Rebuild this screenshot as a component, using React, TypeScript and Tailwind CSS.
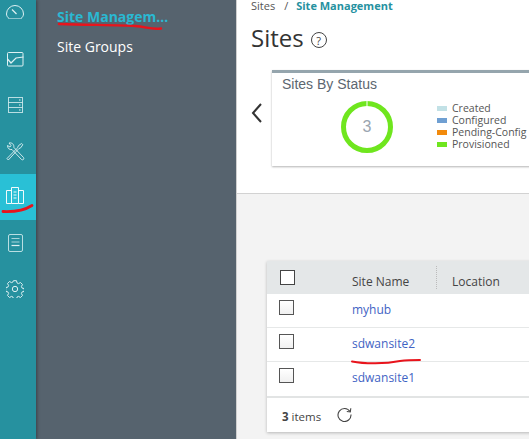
const S = "#dff1f3";

function Gauge() {
  return (
    <svg width="18" height="16" viewBox="0 0 18 16" fill="none" stroke={S} strokeWidth="1">
      <path d="M3 13.500C1.500 12.500.5 10.500.5 9a8.500 8.500 0 0 1 17 0c0 1.500-1 3.500-2.500 4.500" />
      <path d="M3 13.500h12" strokeOpacity=".55" />
      <path d="M6 4.500l4.500 4.500" strokeWidth="1.200" />
    </svg>
  );
}
function Chart() {
  return (
    <svg width="17" height="15" viewBox="0 0 17 15" fill="none" stroke={S} strokeWidth="1">
      <rect x=".5" y=".5" width="15.5" height="13.5" rx="1" />
      <path d="M.5 7l3.500 4 5-5 7.500-1" strokeWidth="1.200" />
    </svg>
  );
}
function Servers() {
  return (
    <svg width="15" height="16" viewBox="0 0 15 16" fill="none" stroke={S} strokeWidth="1">
      <rect x=".5" y=".5" width="14" height="15" strokeOpacity=".8" />
      <path d="M.5 5.500h14M.5 10.500h14" strokeOpacity=".8" />
      <path d="M11 3h1.500M11 8h1.500M11 13h1.500" />
    </svg>
  );
}
function Tools() {
  return (
    <svg width="19" height="19" viewBox="0 0 19 19" fill="none" stroke={S} strokeWidth="1" strokeOpacity=".9">
      <path d="M1 16.500l1.300 1.500 9.700-10.500.8-.8 2-1 2-3-1.200-1.200-3 2-1 2-.8 1z" />
      <path d="M3 1l2 2.500-1 1.500-2.500-1.500c0 3 2 4.500 4.500 4l9.500 10c1.500 1 3-.5 2-2L7.800 5.300C8.300 2.500 6 .3 3 1z" />
    </svg>
  );
}
function Building() {
  return (
    <svg width="18" height="21" viewBox="0 0 18 21" fill="none" stroke="#f2fbfc" strokeWidth="1">
      <path d="M5.500 16.500V.5h7v16zM5.500 3.500H.5v13h5M12.500 3.500h5v13h-5" />
      <path d="M7.500 5h3M7.500 8h3M7.500 11h3" />
    </svg>
  );
}
function Doc() {
  return (
    <svg width="15" height="18" viewBox="0 0 15 18" fill="none" stroke={S} strokeWidth="1">
      <rect x=".5" y=".5" width="14" height="17" rx="1.500" strokeOpacity=".8" />
      <path d="M3.500 4.500h8M3.500 8h8" strokeWidth="1.200" strokeOpacity=".7" />
      <path d="M3.500 11.500h8" strokeWidth="1.200" />
    </svg>
  );
}
function Gear() {
  return (
    <svg width="18" height="18" viewBox="0 0 18 18" fill="none" stroke={S} strokeWidth="1">
      <circle cx="9" cy="9" r="2.700" />
      <path d="M7.500 .7h3l.5 2.200 1.500.7 2-1.100 2 2.100-1.100 1.900.7 1.600 2.200.5v2.800l-2.200.5-.7 1.600 1.100 1.900-2 2.100-2-1.100-1.500.7-.5 2.200h-3l-.5-2.200-1.500-.7-2 1.100-2-2.100 1.100-1.900-.7-1.600-2.200-.5V7.600l2.200-.5.700-1.600-1.100-1.900 2-2.100 2 1.100 1.500-.7z" />
    </svg>
  );
}
function Box() {
  return <div className="h-[15px] w-[15px] border border-[#555] bg-[linear-gradient(#fff,#f0f0f0)]" />;
}

const legend = [
  ["Created", "bg-[#c2e1e6]"],
  ["Configured", "bg-[#6f9fd2]"],
  ["Pending-Config", "bg-[#f28a0c]"],
  ["Provisioned", "bg-[#6fe61e]"],
];

function Row({ name, border }: { name: string; border?: boolean }) {
  return (
    <div className={`flex h-[34px] ${border ? "border-b border-[#e6e8e8]" : ""}`}>
      <div className="w-[85px] pl-[12px] pt-[6px]"><Box /></div>
      <div className="pt-[6px] text-[12px] leading-[20px] text-[#3f63c4]">{name}</div>
    </div>
  );
}

export default function App() {
  return (
    <div className="relative flex h-[439px] w-[529px] overflow-hidden bg-white font-['Open_Sans',sans-serif]">
      <nav className="z-10 flex h-full w-[36px] shrink-0 flex-col bg-[#26919f] shadow-[1px_0_3px_rgba(0,0,0,0.35)]">
        <div className="-mt-[10px] flex flex-col">
          {[Gauge, Chart, Servers, Tools, Building, Doc, Gear].map((Icon, i) => (
            <div key={i} className={`flex h-[46px] items-center justify-center pr-[6px] ${i === 4 ? "bg-[#29c0d6]" : ""}`}>
              <Icon />
            </div>
          ))}
        </div>
      </nav>

      <aside className="w-[200px] shrink-0 bg-[#56636e] pl-[21px] pt-[7px] text-[14px] leading-[20px]">
        <div className="font-bold text-[#2ab8d2]">Site Managem...</div>
        <div className="mt-[10px] text-white">Site Groups</div>
      </aside>

      <main className="flex h-full w-[293px] shrink-0 flex-col overflow-hidden border-l border-[#cfcfcf]">
        <section className="h-[193px] shrink-0 overflow-hidden bg-white">
          <div className="flex h-[11px] whitespace-nowrap pl-[14px] text-[11px] leading-[11px] text-[#555]">
            Sites<span className="ml-[9px]">/</span>
            <span className="ml-[8px] font-bold text-[#26919f]">Site Management</span>
          </div>
          <div className="mt-[9px] flex h-[36px] items-center pl-[14px]">
            <h1 className="text-[24px] leading-[36px] text-[#333]">Sites</h1>
            <span className="ml-[7px] mt-[4px] flex h-[16px] w-[16px] items-center justify-center rounded-full border border-[#444] text-[11px] leading-none text-[#444]">?</span>
          </div>
          <div className="mt-[14px] flex items-start">
            <svg className="ml-[14px] mt-[33px] w-[12px] shrink-0" width="12" height="20" viewBox="0 0 12 20" fill="none" stroke="#333" strokeWidth="2">
              <path d="M10 1 2 10l8 9" />
            </svg>
            <div className="ml-[9px] h-[96px] w-[400px] shrink-0 border-t-[3px] border-[#95a5ad] bg-white pl-[10px] pt-[2px] shadow-[0_1px_2px_rgba(0,0,0,0.3)]">
              <div className="font-['Liberation_Sans',sans-serif] text-[14px] leading-[18px] text-[#5c6670]">Sites By Status</div>
              <div className="mt-[8px] flex">
                <div className="relative ml-[59px] flex h-[52px] w-[52px] items-center justify-center">
                  <svg className="absolute inset-0" width="52" height="52" viewBox="0 0 52 52">
                    <circle cx="26" cy="26" r="23.500" fill="none" stroke="#6fe61e" strokeWidth="5" />
                    <rect x="25.500" y="0" width="1" height="5" fill="#fff" />
                  </svg>
                  <span className="font-['Liberation_Sans',sans-serif] text-[16px] text-[#9aa5b0]">3</span>
                </div>
                <div className="ml-[44px] mt-[1px] text-[10.500px] leading-[12px] text-[#555]">
                  {legend.map(([t, c]) => (
                    <div key={t} className="flex items-center whitespace-nowrap">
                      <span className={`mr-[5px] h-[5px] w-[10px] ${c}`} />
                      {t}
                    </div>
                  ))}
                </div>
              </div>
            </div>
          </div>
        </section>

        <section className="flex-1 border-t border-[#d2d2d2] bg-[#f3f3f3] pl-[30px] pt-[67px]">
          <div className="w-[400px] bg-white shadow-[0_1px_3px_rgba(0,0,0,0.25)]">
            <div className="flex h-[33px] bg-[#e4e7e8] text-[12px] text-[#444]">
              <div className="w-[85px] pl-[13px] pt-[9px]"><div className="h-[15px] w-[15px] border border-[#444] bg-white" /></div>
              <div className="mt-[5px] h-[23px] w-[85px] border-r border-dotted border-[#bbb] pt-[6px] leading-[20px]">Site Name</div>
              <div className="pl-[15px] pt-[11px] leading-[20px]">Location</div>
            </div>
            <Row name="myhub" border />
            <Row name="sdwansite2" border />
            <Row name="sdwansite1" />
            <div className="flex h-[36px] items-center border-t-2 border-[#e2e4e4] pl-[15px] text-[11.500px] text-[#444]">
              <span className="mt-[3px]"><b>3</b> items</span>
              <svg className="ml-[16px] -mt-[1px]" width="15" height="15" viewBox="0 0 15 15" fill="none" stroke="#444" strokeWidth="1.100">
                <path d="M13 4.500A6.500 6.500 0 1 0 14 7.500" />
                <path d="M13.800 1.200 13.300 5 9.800 4.500" />
              </svg>
            </div>
          </div>
        </section>
      </main>

      <svg className="pointer-events-none absolute left-0 top-0 z-20" width="529" height="439" fill="none" stroke="#e8141c" strokeLinecap="round">
        <path d="M59 24C90 25 120 25 135 26 147 27 152 30 161 28.500" strokeWidth="2.400" />
        <path d="M3 211.500C15 212 25 210 32 205.500" strokeWidth="2.800" />
        <path d="M352 361.500C365 364 385 364 400 361 408 360 414 360 420 360" strokeWidth="2" />
      </svg>
    </div>
  );
}
